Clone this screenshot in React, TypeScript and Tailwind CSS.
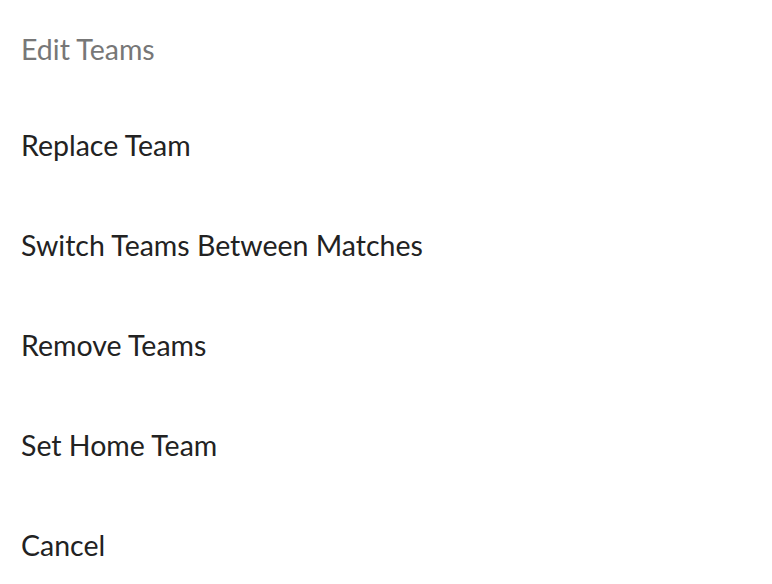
export default function App() {
  const items = [
    "Replace Team",
    "Switch Teams Between Matches",
    "Remove Teams",
    "Set Home Team",
    "Cancel",
  ];
  return (
    <div className="w-[772px] h-[584px] bg-white font-['Lato',sans-serif] overflow-hidden">
      <div className="h-[96px] flex items-center px-[21px] pt-[2px] text-[28.5px] text-[#777777]">
        Edit Teams
      </div>
      {items.map((item) => (
        <button
          key={item}
          className="w-full h-[100px] flex items-center px-[21px] pb-[2px] text-left text-[28.5px] text-[#222222]"
        >
          {item}
        </button>
      ))}
    </div>
  );
}
